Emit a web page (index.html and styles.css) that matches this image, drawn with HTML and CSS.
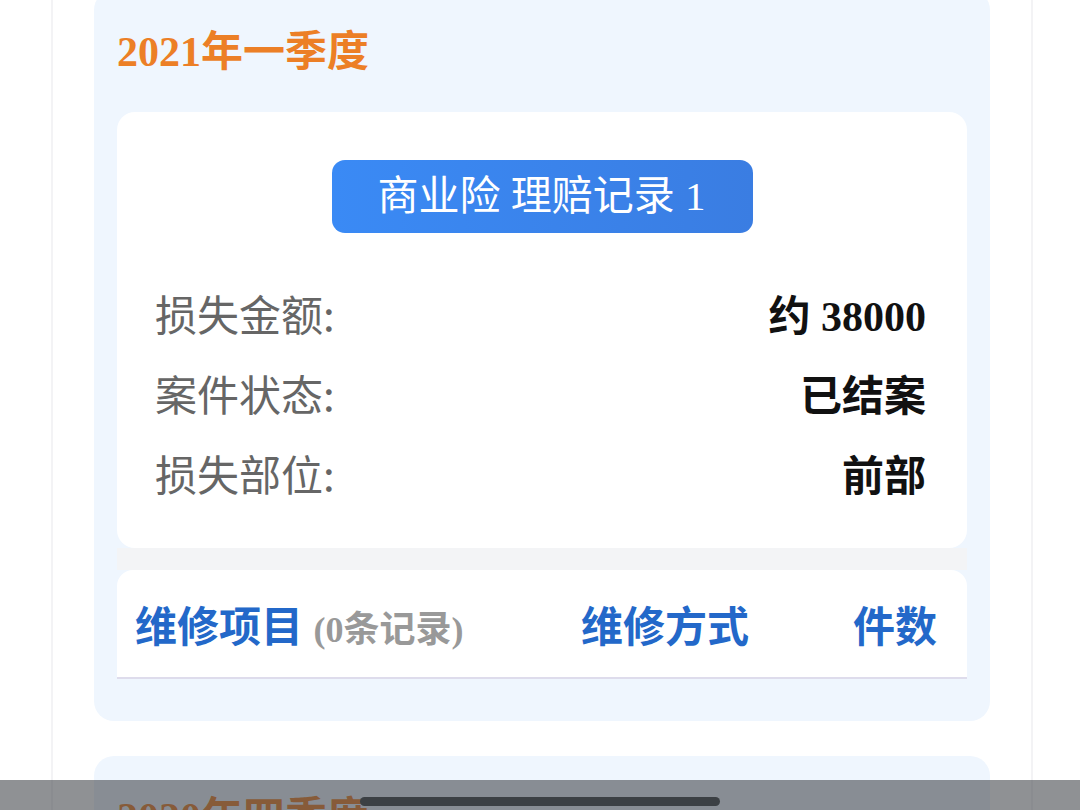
FILE: index.html
```html
<!DOCTYPE html>
<html lang="zh-CN">
<head>
<meta charset="utf-8">
<title>理赔记录</title>
<link rel="stylesheet" href="styles.css">
</head>
<body>
<div class="page">
  <section class="quarter">
    <h2 class="quarter-title">2021年一季度</h2>
    <div class="claim-card">
      <div class="pill-wrap"><span class="pill">商业险 理赔记录 1</span></div>
      <div class="rows">
        <div class="row"><span class="label">损失金额:</span><span class="value">约 38000</span></div>
        <div class="row"><span class="label">案件状态:</span><span class="value">已结案</span></div>
        <div class="row"><span class="label">损失部位:</span><span class="value">前部</span></div>
      </div>
    </div>
    <div class="sep"></div>
    <div class="repair-card">
      <div class="col col-item">维修项目 <span class="count">(0条记录)</span></div>
      <div class="col col-way">维修方式</div>
      <div class="col col-num">件数</div>
    </div>
  </section>
  <section class="quarter">
    <h2 class="quarter-title">2020年四季度</h2>
  </section>
</div>
<div class="overlay"><span class="handle"></span></div>
</body>
</html>
```
FILE: styles.css
```css
html, body {
  margin: 0;
  padding: 0;
  background: #ffffff;
  overflow: hidden;
  height: 810px;
}
body {
  font-family: "Liberation Serif", "Noto Sans CJK SC", serif;
  position: relative;
}
.page {
  margin: -10px 0 0 51px;
  border-left: 2px solid #f3f3f5;
  border-right: 2px solid #f3f3f5;
  min-height: 900px;
  padding: 0 41px;
  box-sizing: border-box;
  width: 982px;
}
.quarter {
  background: #eff6fe;
  border-radius: 20px;
  padding: 34px 23px 42px;
  margin-bottom: 35px;
}
.quarter-title {
  margin: 0 0 32px;
  font-size: 42px;
  line-height: 56px;
  font-weight: bold;
  color: #ec7f26;
}
.claim-card {
  background: #ffffff;
  border-radius: 18px;
  padding: 48px 41px 36px 38px;
}
.pill-wrap {
  display: flex;
  justify-content: center;
  padding-left: 3px;
}
.pill {
  display: inline-block;
  height: 73px;
  line-height: 73px;
  padding: 0 47px 0 46px;
  border-radius: 13px;
  background: linear-gradient(90deg, #3a8af5 0%, #3a7de2 100%);
  color: #ffffff;
  font-size: 41px;
  font-family: "Liberation Serif", "Noto Sans CJK SC", serif;
}
.rows {
  margin-top: 39px;
}
.row {
  display: flex;
  justify-content: space-between;
  align-items: center;
  height: 80px;
}
.label {
  font-size: 42px;
  color: #666666;
  font-family: "Noto Sans CJK SC", sans-serif;
}
.value {
  font-size: 42px;
  font-weight: bold;
  color: #111111;
}
.sep {
  height: 22px;
  background: #f3f4f6;
}
.repair-card {
  display: grid;
  grid-template-columns: 446px 1fr auto;
  align-items: center;
  height: 107px;
  background: #ffffff;
  border-radius: 16px 16px 0 0;
  border-bottom: 2px solid #dedcec;
  padding: 0 30px 0 18px;
}
.col {
  font-size: 42px;
  font-weight: bold;
  color: #2368c9;
  white-space: nowrap;
}
.count {
  font-size: 36px;
  color: #999999;
}
.overlay {
  position: absolute;
  left: 0;
  top: 780px;
  width: 1080px;
  height: 30px;
  background: rgba(62, 66, 70, 0.58);
}
.handle {
  position: absolute;
  left: 360px;
  top: 17px;
  width: 360px;
  height: 9px;
  border-radius: 5px;
  background: #3c4044;
}
```
